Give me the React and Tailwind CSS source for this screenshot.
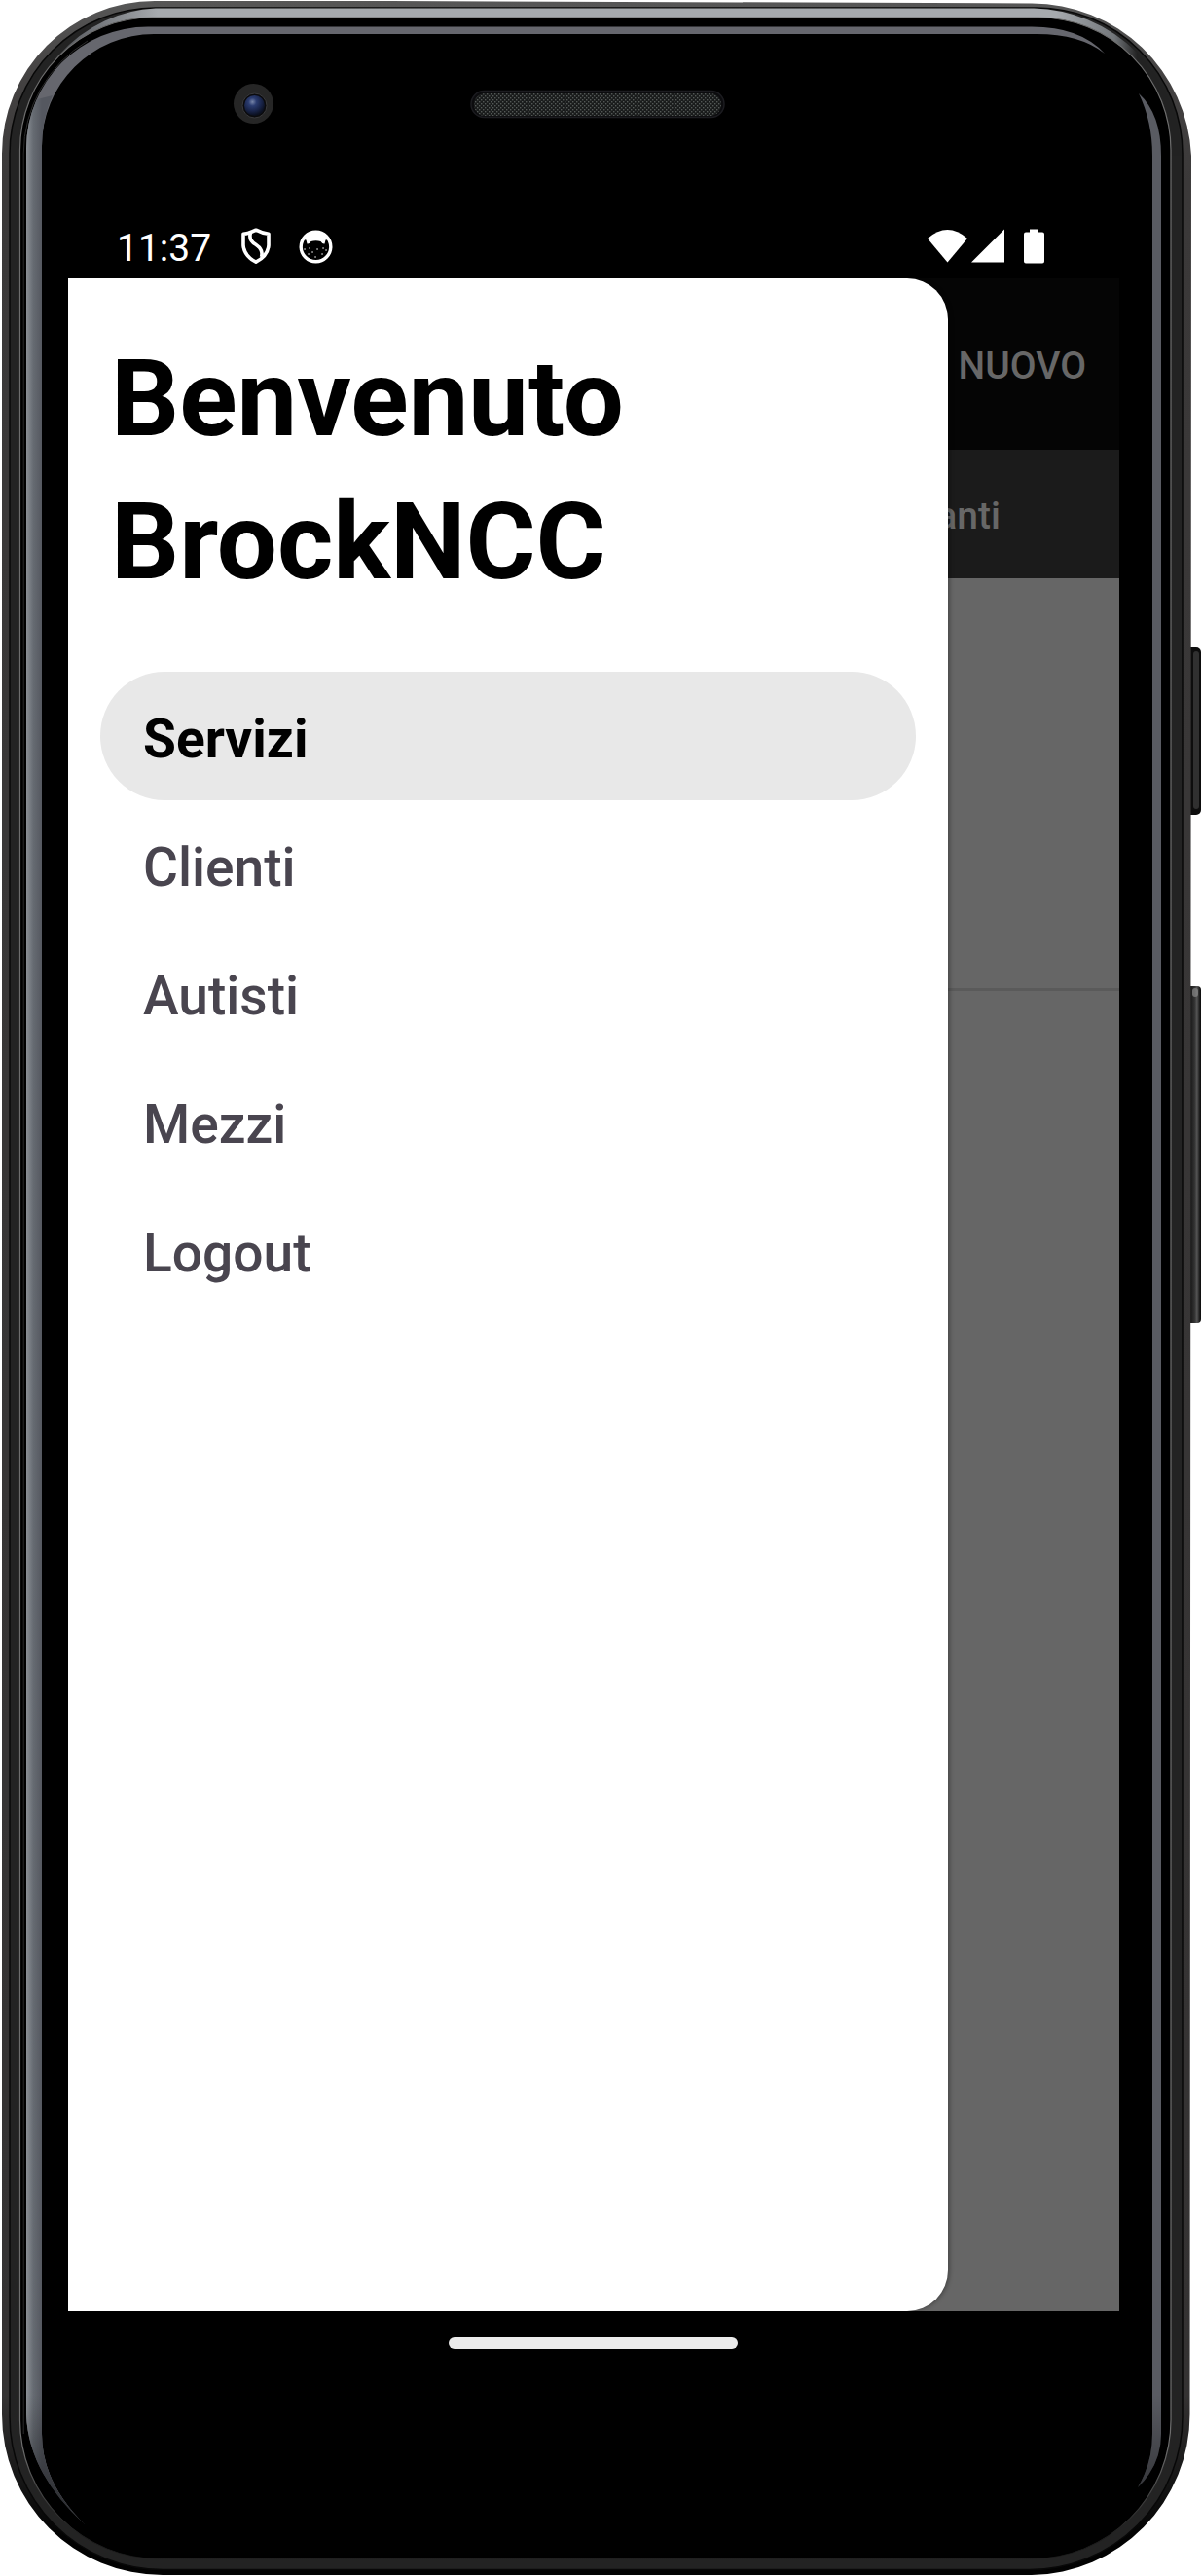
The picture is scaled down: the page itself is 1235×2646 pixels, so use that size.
const frame = (l, t, r, b, a, c = a) =>
  `M${l + a} ${t}H${r - a}A${a} ${a} 0 0 1 ${r} ${t + a}V${b - c}A${c} ${c} 0 0 1 ${r - c} ${b}H${l + c}A${c} ${c} 0 0 1 ${l} ${b - c}V${t + a}A${a} ${a} 0 0 1 ${l + a} ${t}Z`;

function PhoneBody() {
  return (
    <svg className="absolute inset-0" width="1235" height="2646" viewBox="0 0 1235 2646" fill="none" aria-hidden="true">
      <defs>
        <linearGradient id="rim" x1="0" y1="0" x2="0" y2="2646" gradientUnits="userSpaceOnUse">
          <stop offset="0" stopColor="#575757" />
          <stop offset="0.03" stopColor="#444242" />
          <stop offset="0.07" stopColor="#3b3939" />
          <stop offset="0.93" stopColor="#343232" />
          <stop offset="0.965" stopColor="#141414" />
          <stop offset="0.985" stopColor="#020202" />
        </linearGradient>
        <linearGradient id="edge" x1="0" y1="0" x2="0" y2="2646" gradientUnits="userSpaceOnUse">
          <stop offset="0" stopColor="#6d6d6d" />
          <stop offset="0.95" stopColor="#6d6d6d" />
          <stop offset="0.985" stopColor="#1c1c1c" />
        </linearGradient>
        <linearGradient id="shine" x1="20" y1="0" x2="1204" y2="0" gradientUnits="userSpaceOnUse">
          <stop offset="0.015" stopColor="#222" />
          <stop offset="0.05" stopColor="#62656a" />
          <stop offset="0.12" stopColor="#a6aaae" />
          <stop offset="0.9" stopColor="#a6aaae" />
          <stop offset="0.95" stopColor="#73777b" />
          <stop offset="0.97" stopColor="#222" />
        </linearGradient>
        <linearGradient id="leftGlass" x1="27" y1="0" x2="43" y2="0" gradientUnits="userSpaceOnUse">
          <stop offset="0" stopColor="#8b9096" />
          <stop offset="0.45" stopColor="#666b72" />
          <stop offset="1" stopColor="#555860" />
        </linearGradient>
        <linearGradient id="glassFade" x1="0" y1="2460" x2="0" y2="2594" gradientUnits="userSpaceOnUse">
          <stop offset="0" stopColor="#000" stopOpacity="0" />
          <stop offset="1" stopColor="#000" stopOpacity="0.55" />
        </linearGradient>
        <linearGradient id="key" x1="1222" y1="0" x2="1234" y2="0" gradientUnits="userSpaceOnUse">
          <stop offset="0" stopColor="#111" />
          <stop offset="0.45" stopColor="#333" />
          <stop offset="0.65" stopColor="#555" />
          <stop offset="0.85" stopColor="#222" />
          <stop offset="1" stopColor="#0a0a0a" />
        </linearGradient>
        <radialGradient id="lens" cx="0.4" cy="0.32" r="0.65">
          <stop offset="0" stopColor="#7785a8" />
          <stop offset="0.3" stopColor="#2b3c70" />
          <stop offset="0.7" stopColor="#182347" />
          <stop offset="1" stopColor="#0b1020" />
        </radialGradient>
        <pattern id="mesh" width="4" height="4" patternUnits="userSpaceOnUse">
          <rect width="4" height="4" fill="#191b1b" />
          <rect width="1.4" height="1.4" fill="#545957" />
          <rect x="2" y="2" width="1.4" height="1.4" fill="#545957" />
        </pattern>
      </defs>
      <rect x="1218" y="665" width="16" height="172" rx="5" fill="#0d0d0d" />
      <rect x="1226" y="669" width="6" height="162" rx="3" fill="#303030" />
      <rect x="1218" y="1013" width="16" height="346" rx="4" fill="url(#key)" />
      <rect x="1225" y="1015" width="6" height="9" rx="3" fill="#8a8a8a" opacity="0.7" />
      <path d="M159 1H400L1060 3.5A164 164 0 0 1 1224 160L1222.5 2480A165 165 0 0 1 1060 2645H167A165 165 0 0 1 2 2480V158A157 157 0 0 1 159 1Z" fill="url(#rim)" />
      <path d={frame(10, 8, 1215, 2639.5, 150, 157)} fill="#232323" stroke="#080808" strokeWidth="1.5" />
      <path d="M25 165A141 151 0 0 1 160 13.5H1062A151 151 0 0 1 1209 160" stroke="url(#shine)" strokeWidth="10" />
      <path d={frame(20.5, 18, 1203, 2628, 136, 142)} fill="#000" stroke="url(#edge)" strokeWidth="1.2" />
      <path d={frame(22, 19, 1201.5, 2628, 135, 142)} fill="#000" />
      <path d="M24.2 2500V158A135 135 0 0 1 90 42" stroke="#2c2c2c" strokeWidth="1" />
      <path d="M27 153V2480Q29 2540 87 2593Q43 2550 43 2500V150A115 115 0 0 1 158 35H1065Q1110 35 1135 55Q1110 27.5 1060 27.5H152A125 125 0 0 0 27 153Z" fill="#66676e" />
      <path d="M27 153V2480Q29 2540 87 2593Q43 2550 43 2500V150Q43 122 54 98L38 102Q27 125 27 153Z" fill="url(#leftGlass)" />
      <path d="M27 2460H43V2500Q43 2550 87 2593Q27 2540 27 2480Z" fill="url(#glassFade)" />
      <path d="M1170 96Q1193 117 1193 160V2500Q1193 2532 1169 2555Q1184 2530 1184 2500V160Q1184 125 1170 96Z" fill="#595b62" />
      <path d="M1184 2400H1193V2500Q1193 2532 1169 2555Q1184 2530 1184 2500Z" fill="url(#glassFade)" />
      <circle cx="260.5" cy="106.5" r="20.5" fill="#262626" />
      <circle cx="261.5" cy="108.5" r="12.5" fill="#0b0b0d" stroke="#3a3a3c" />
      <circle cx="261.5" cy="108.5" r="10.5" fill="url(#lens)" />
      <rect x="484" y="93.5" width="260" height="27" rx="13.5" fill="#0c0c0e" stroke="#1c1c20" strokeWidth="1.5" />
      <rect x="487" y="96" width="254" height="23" rx="11.5" fill="url(#mesh)" />
    </svg>
  );
}

function StatusBar() {
  return (
    <div className="flex h-[286px] items-end pl-[50px] text-white">
      <div className="flex h-[66px] w-full items-center">
        <span className="w-[128px] pt-[5px] text-[39px] leading-none">11:37</span>
        <svg width="30" height="38" viewBox="0 0 30 38" fill="none" stroke="#fff" strokeWidth="3.6" strokeLinejoin="round">
          <path d="M15 2.2Q9 5.5 2 6.2V18Q3 29 15 35.2Q27 29 28 18V6.2Q21 5.5 15 2.2Z" />
          <path d="M9.500 5Q7 12.500 14.500 17Q23 22.500 20.500 30" />
        </svg>
        <svg className="ml-[29px]" width="35" height="35" viewBox="0 0 35 35">
          <circle cx="17.500" cy="17.500" r="15.300" fill="#000" stroke="#fff" strokeWidth="3.400" />
          <path d="M4 10Q9 2 17.500 2Q26 2 31 10L27.500 10.500L26.500 14.500Q24.500 15 22.500 12Q17.500 10.500 12.500 12Q10.500 15 8.500 14.500L7.500 10.500Z" fill="#fff" />
          <path d="M6 20h.1M11 19h.1M14 23h.1M19 20h.1M25 19h.1M28 21h.1M10 25h.1M17 28h.1M24 25h.1" stroke="#fff" strokeWidth="1.400" strokeLinecap="round" />
        </svg>
        <svg className="ml-auto mr-[77px]" width="120" height="36" viewBox="0 0 120 36" fill="#fff">
          <path d="M0 10Q20.500-8 41 10L20.500 34.500Z" />
          <path d="M45 34.500H79V.5Z" />
          <path d="M105 .5h9v3h4q2 0 2 2V33.500q0 2-2 2h-17q-2 0-2-2V5.500q0-2 2-2h4Z" />
        </svg>
      </div>
    </div>
  );
}

function ServicesPage() {
  return (
    <div className="flex h-full w-full flex-col bg-[#666] font-medium text-[#676767]">
      <header className="flex h-[176px] items-center justify-end bg-[#050505] pr-[34px]">
        <span className="pt-[4px] text-[39px] leading-none">NUOVO</span>
      </header>
      <div className="flex h-[132px] items-center justify-end bg-[#1b1b1b] pr-[122px]">
        <span className="pt-[5px] text-[39px] leading-none">anti</span>
      </div>
      <div className="h-[424px] border-b-[3px] border-[#5a5a5a]" />
    </div>
  );
}

const items = ["Servizi", "Clienti", "Autisti", "Mezzi", "Logout"];

function Drawer() {
  return (
    <nav className="absolute left-0 top-0 h-full w-[904px] rounded-r-[42px] bg-white pt-[50px] shadow-[2px_0_4px_rgba(0,0,0,0.3)]">
      <h1 className="pl-[44px] text-[110px] font-bold leading-[147px] text-black">
        Benvenuto
        <br />
        BrockNCC
      </h1>
      <ul className="mt-[60px] px-[33px]">
        {items.map((name, i) => (
          <li
            key={name}
            className={
              i === 0
                ? "flex h-[132px] items-center rounded-full bg-[#e8e8e8] pl-[44px] text-[55.125px] font-bold text-black"
                : "flex h-[132px] items-center pl-[44px] text-[55.125px] font-medium text-[#49454f]"
            }
          >
            <span className="pt-[6px]">{name}</span>
          </li>
        ))}
      </ul>
    </nav>
  );
}

export default function App() {
  return (
    <div className="relative h-[2646px] w-[1235px] overflow-hidden bg-white font-[Roboto,sans-serif]">
      <PhoneBody />
      <div className="relative ml-[70px] w-[1080px]">
        <StatusBar />
        <main className="relative h-[2088px] overflow-hidden">
          <ServicesPage />
          <Drawer />
        </main>
        <div className="ml-[391px] mt-[27px] h-[12px] w-[297px] rounded-full bg-[#ebebeb]" />
      </div>
    </div>
  );
}
